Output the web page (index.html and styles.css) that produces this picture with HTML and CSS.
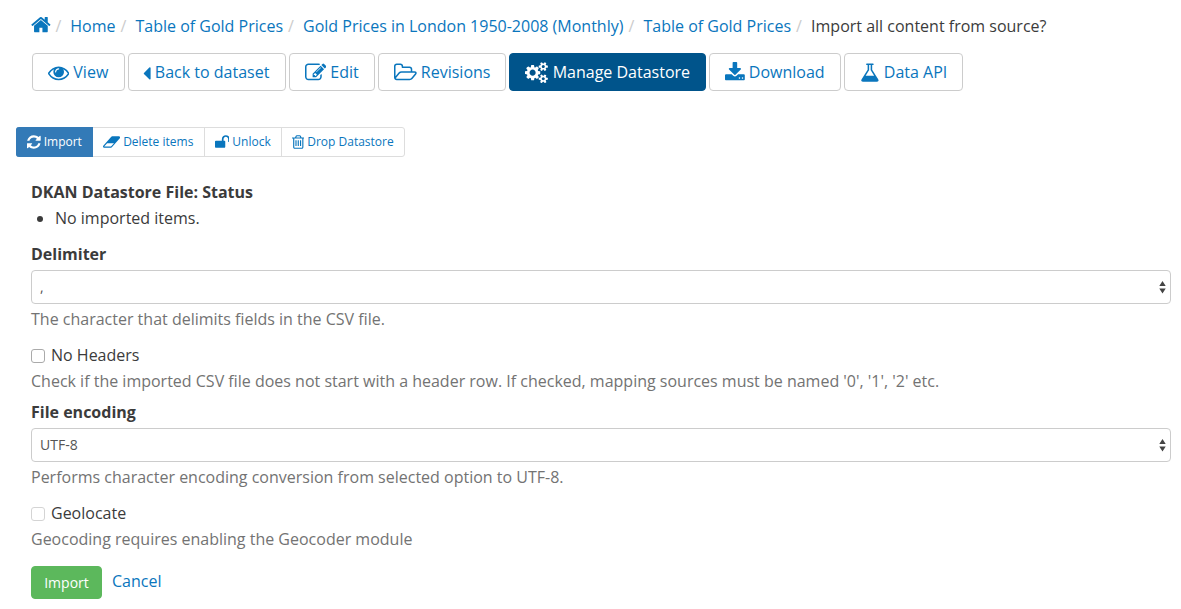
FILE: index.html
```html
<!DOCTYPE html>
<html lang="en">
<head>
<meta charset="utf-8">
<title>Import all content from source?</title>
<link rel="stylesheet" href="styles.css">
</head>
<body>
<ol class="breadcrumb">
<li><a href="#" aria-label="Front page"><svg class="icon icon-home" viewBox="64 0 1664 1792"><path d="M1472 992v480q0 26-19 45t-45 19h-384v-384h-256v384h-384q-26 0-45-19t-19-45v-480q0-1 .5-3t.5-3l575-474 575 474q1 2 1 6zm223-69l-62 74q-8 9-21 11h-3q-13 0-21-7l-692-577-692 577q-12 8-24 7-13-2-21-11l-62-74q-8-10-7-23.500t11-21.500l719-599q32-26 76-26t76 26l244 204v-195q0-14 9-23t23-9h192q14 0 23 9t9 23v408l219 182q10 8 11 21.500t-7 23.500z"/></svg></a></li>
<li><a href="#">Home</a></li>
<li><a href="#">Table of Gold Prices</a></li>
<li><a href="#">Gold Prices in London 1950-2008 (Monthly)</a></li>
<li><a href="#">Table of Gold Prices</a></li>
<li>Import all content from source?</li>
</ol>

<nav class="tabs">
<a href="#" class="tab view"><svg class="icon" viewBox="0 0 1792 1792"><path d="M1664 960q-152-236-381-353 61 104 61 225 0 185-131.500 316.500t-316.500 131.500-316.500-131.500-131.500-316.500q0-121 61-225-229 117-381 353 133 205 333.500 326.500t434.500 121.500 434.500-121.500 333.500-326.500zm-720-384q0-20-14-34t-34-14q-125 0-214.500 89.500t-89.500 214.500q0 20 14 34t34 14 34-14 14-34q0-86 61-147t147-61q20 0 34-14t14-34zm848 384q0 34-20 69-140 230-376.500 368.500t-499.500 138.500-499.500-139-376.500-368q-20-35-20-69t20-69q140-229 376.500-368t499.500-139 499.500 139 376.500 368q20 35 20 69z"/></svg><span>View</span></a>
<a href="#" class="tab back"><svg class="icon caret" viewBox="0 0 640 1792"><path d="M640 512v896q0 26-19 45t-45 19-45-19l-448-448q-19-19-19-45t19-45l448-448q19-19 45-19t45 19 19 45z"/></svg><span>Back to dataset</span></a>
<a href="#" class="tab edit"><svg class="icon" viewBox="0 0 1792 1792"><path d="M888 1184l116-116-152-152-116 116v56h96v96h56zm440-720q-16-16-33 1l-350 350q-17 17-1 33t33-1l350-350q17-17 1-33zm80 594v190q0 119-84.500 203.500t-203.500 84.500h-832q-119 0-203.500-84.500t-84.500-203.500v-832q0-119 84.500-203.500t203.500-84.500h832q63 0 117 25 15 7 18 23 3 17-9 29l-49 49q-14 14-32 8-23-6-45-6h-832q-66 0-113 47t-47 113v832q0 66 47 113t113 47h832q66 0 113-47t47-113v-126q0-13 9-22l64-64q15-15 35-7t20 29zm-96-738l288 288-672 672h-288v-288zm444 132l-92 92-288-288 92-92q28-28 68-28t68 28l152 152q28 28 28 68t-28 68z"/></svg><span>Edit</span></a>
<a href="#" class="tab revisions"><svg class="icon" viewBox="-64 0 1920 1792"><path d="M1717 931q0-35-53-35h-1088q-40 0-85.500 21.500t-71.500 52.500l-294 363q-18 24-18 40 0 35 53 35h1088q40 0 86-22t71-53l294-363q18-22 18-39zm-1141-163h768v-160q0-40-28-68t-68-28h-576q-40 0-68-28t-28-68v-64q0-40-28-68t-68-28h-320q-40 0-68 28t-28 68v853l256-315q44-53 116-87.500t140-34.500zm1269 163q0 62-46 120l-295 363q-43 53-116 87.500t-140 34.500h-1088q-92 0-158-66t-66-158v-960q0-92 66-158t158-66h320q92 0 158 66t66 158v32h544q92 0 158 66t66 158v160h192q54 0 99 24.500t67 70.500q15 32 15 68z"/></svg><span>Revisions</span></a>
<a href="#" class="tab manage active"><svg class="icon" viewBox="-64 0 1920 1792"><path d="M832 896q0-106-75-181t-181-75-181 75-75 181 75 181 181 75 181-75 75-181zm768 512q0-52-38-90t-90-38-90 38-38 90q0 53 37.500 90.500t90.500 37.500 90.500-37.500 37.500-90.500zm0-1024q0-52-38-90t-90-38-90 38-38 90q0 53 37.500 90.500t90.500 37.500 90.500-37.500 37.500-90.500zm-384 421v185q0 10-7 19.500t-16 10.500l-155 24q-11 35-32 76 34 48 90 115 7 11 7 20 0 12-7 19-23 30-82.500 89.500t-78.500 59.500q-11 0-21-7l-115-90q-37 19-77 31-11 108-23 155-7 24-30 24h-186q-11 0-20-7.500t-10-17.500l-23-153q-34-10-75-31l-118 89q-7 7-20 7-11 0-21-8-144-133-144-160 0-9 7-19 10-14 41-53t47-61q-23-44-35-82l-152-24q-10-1-17-9.500t-7-19.500v-185q0-10 7-19.500t16-10.500l155-24q11-35 32-76-34-48-90-115-7-11-7-20 0-12 7-20 22-30 82-89t79-59q11 0 21 7l115 90q34-18 77-32 11-108 23-154 7-24 30-24h186q11 0 20 7.500t10 17.500l23 153q34 10 75 31l118-89q8-7 20-7 11 0 21 8 144 133 144 160 0 8-7 19-12 16-42 54t-45 60q23 48 34 82l152 23q10 2 17 10.500t7 19.500zM1856 1338v140q0 16-149 31-12 27-30 52 51 113 51 138 0 4-4 7-122 71-124 71-8 0-46-47t-52-68q-20 2-30 2t-30-2q-14 21-52 68t-46 47q-2 0-124-71-4-3-4-7 0-25 51-138-18-25-30-52-149-15-149-31v-140q0-16 149-31 13-29 30-52-51-113-51-138 0-4 4-7 4-2 35-20t59-34 30-16q8 0 46 46.500t52 67.500q20-2 30-2t30 2q51-71 92-112l6-2q4 0 124 70 4 3 4 7 0 25-51 138 17 23 30 52 149 15 149 31zM1856 314v140q0 16-149 31-12 27-30 52 51 113 51 138 0 4-4 7-122 71-124 71-8 0-46-47t-52-68q-20 2-30 2t-30-2q-14 21-52 68t-46 47q-2 0-124-71-4-3-4-7 0-25 51-138-18-25-30-52-149-15-149-31v-140q0-16 149-31 13-29 30-52-51-113-51-138 0-4 4-7 4-2 35-20t59-34 30-16q8 0 46 46.500t52 67.500q20-2 30-2t30 2q51-71 92-112l6-2q4 0 124 70 4 3 4 7 0 25-51 138 17 23 30 52 149 15 149 31z"/></svg><span>Manage Datastore</span></a>
<a href="#" class="tab download"><svg class="icon" viewBox="64 0 1664 1792"><path d="M1344 1344q0-26-19-45t-45-19-45 19-19 45 19 45 45 19 45-19 19-45zm256 0q0-26-19-45t-45-19-45 19-19 45 19 45 45 19 45-19 19-45zm128-224v320q0 40-28 68t-68 28h-1472q-40 0-68-28t-28-68v-320q0-40 28-68t68-28h465l135 136q58 56 136 56t136-56l136-136h464q40 0 68 28t28 68zm-325-569q17 41-14 70l-448 448q-18 19-45 19t-45-19l-448-448q-31-29-14-70 17-39 59-39h256v-448q0-26 19-45t45-19h256q26 0 45 19t19 45v448h256q42 0 59 39z"/></svg><span>Download</span></a>
<a href="#" class="tab api"><svg class="icon" viewBox="64 0 1664 1792"><path d="M1591 1448q56 89 21.500 152.500t-140.500 63.500h-1152q-106 0-140.500-63.500t21.500-152.500l503-793v-399h-64q-26 0-45-19t-19-45 19-45 45-19h512q26 0 45 19t19 45-19 45-45 19h-64v399zm-779-725l-272 429h712l-272-429-20-31v-436h-128v436z"/></svg><span>Data API</span></a>
</nav>

<nav class="actions">
<a href="#" class="action import active"><svg class="icon" viewBox="128 0 1536 1792"><path d="M1639 1056q0 5-1 7-64 268-268 434.500t-478 166.500q-146 0-282.500-55t-243.500-157l-129 129q-19 19-45 19t-45-19-19-45v-448q0-26 19-45t45-19h448q26 0 45 19t19 45-19 45l-137 137q71 66 161 102t187 36q134 0 250-65t186-179q11-17 53-117 8-23 30-23h192q13 0 22.500 9.500t9.500 22.500zm25-800v448q0 26-19 45t-45 19h-448q-26 0-45-19t-19-45 19-45l138-138q-148-137-349-137-134 0-250 65t-186 179q-11 17-53 117-8 23-30 23h-199q-13 0-22.500-9.500t-9.500-22.500v-7q65-268 270-434.500t480-166.500q146 0 284 55.500t245 156.500l130-129q19-19 45-19t45 19 19 45z"/></svg><span>Import</span></a>
<a href="#" class="action delete"><svg class="icon" viewBox="0 0 1920 1792"><path d="M896 1408l336-384h-768l-336 384h768zm1013-1077q15 34 9.500 71.500t-30.500 65.500l-896 1024q-38 44-96 44h-768q-38 0-69.500-20.500t-47.500-54.500q-15-34-9.500-71.500t30.500-65.500l896-1024q38-44 96-44h768q38 0 69.500 20.500t47.500 54.500z"/></svg><span>Delete items</span></a>
<a href="#" class="action unlock"><svg class="icon" viewBox="64 0 1664 1792"><path d="M1728 576v256q0 26-19 45t-45 19h-64q-26 0-45-19t-19-45v-256q0-106-75-181t-181-75-181 75-75 181v192h96q40 0 68 28t28 68v576q0 40-28 68t-68 28h-960q-40 0-68-28t-28-68v-576q0-40 28-68t68-28h672v-192q0-185 131.500-316.500t316.500-131.500 316.500 131.500 131.500 316.500z"/></svg><span>Unlock</span></a>
<a href="#" class="action drop"><svg class="icon" viewBox="192 0 1408 1792"><path d="M704 736v576q0 14-9 23t-23 9h-64q-14 0-23-9t-9-23v-576q0-14 9-23t23-9h64q14 0 23 9t9 23zm256 0v576q0 14-9 23t-23 9h-64q-14 0-23-9t-9-23v-576q0-14 9-23t23-9h64q14 0 23 9t9 23zm256 0v576q0 14-9 23t-23 9h-64q-14 0-23-9t-9-23v-576q0-14 9-23t23-9h64q14 0 23 9t9 23zm128 724v-948h-896v948q0 22 7 40.500t14.500 27 10.500 8.500h832q3 0 10.500-8.500t14.500-27 7-40.500zm-672-1076h448l-48-117q-7-9-17-11h-317q-10 2-17 11zm928 32v64q0 14-9 23t-23 9h-96v948q0 83-47 143.500t-113 60.500h-832q-66 0-113-58.500t-47-141.500v-952h-96q-14 0-23-9t-9-23v-64q0-14 9-23t23-9h309l70-167q15-37 54-63t79-26h320q40 0 79 26t54 63l70 167h309q14 0 23 9t9 23z"/></svg><span>Drop Datastore</span></a>
</nav>

<form class="form">
<div class="label">DKAN Datastore File: Status</div>
<ul class="status"><li>No imported items.</li></ul>
<label class="label delimiter">Delimiter</label>
<div class="select comma"><span>,</span><svg class="arrows" viewBox="0 0 7 13"><path d="M3.500 0L6.700 5H.300zM3.500 12.500L6.700 7.500H.300z"/></svg></div>
<p class="help">The character that delimits fields in the CSV file.</p>
<label class="check"><input type="checkbox" class="box">No Headers</label>
<p class="help">Check if the imported CSV file does not start with a header row. If checked, mapping sources must be named '0', '1', '2' etc.</p>
<label class="label encoding">File encoding</label>
<div class="select"><span>UTF-8</span><svg class="arrows" viewBox="0 0 7 13"><path d="M3.500 0L6.700 5H.300zM3.500 12.500L6.700 7.500H.300z"/></svg></div>
<p class="help">Performs character encoding conversion from selected option to UTF-8.</p>
<label class="check"><input type="checkbox" class="box" disabled>Geolocate</label>
<p class="help">Geocoding requires enabling the Geocoder module</p>
<div class="buttons"><button type="button" class="submit">Import</button><a href="#">Cancel</a></div>
</form>
</body>
</html>
```
FILE: styles.css
```css
* { box-sizing: border-box; }
body {
  margin: 0;
  height: 609px;
  overflow: hidden;
  background: #fff;
  color: #3b3b3b;
  font: 16px/26px "Open Sans", "Noto Sans", sans-serif;
}
a { color: #0a76bd; text-decoration: none; }
p, ul, ol { margin: 0; padding: 0; }
.icon {
  display: block;
  flex: none;
  height: 1.3333em;
  fill: currentColor;
}

.breadcrumb {
  display: flex;
  height: 53px;
  padding: 13px 0 0 31px;
  list-style: none;
  white-space: nowrap;
}
.breadcrumb li { display: flex; }
.breadcrumb li + li::before {
  content: "/\00a0";
  padding: 0 5px;
  color: #ccc;
}
.breadcrumb li:nth-child(2)::before { padding: 0 4.8px 0 4.6px; }
.icon-home { margin-top: 1px; }

.tabs {
  display: flex;
  gap: 3px;
  padding-left: 32px;
}
.tab {
  display: flex;
  gap: 4px;
  height: 38px;
  padding: 5px 0 0 15px;
  border: 1px solid #ccc;
  border-radius: 4px;
  white-space: nowrap;
}
.tab .icon { margin-top: 2.6px; }
.tab .caret { margin-left: -0.8px; }
.tab.active { background: #00548b; border-color: #00548b; color: #fff; }
.view { width: 93px; }
.back { width: 158px; }
.edit { width: 86px; }
.revisions { width: 128px; }
.manage { width: 197px; }
.manage.tab { gap: 4.8px; }
.download { width: 132px; }
.api { width: 119px; }

.actions {
  display: flex;
  width: 389px;
  margin: 36px 0 0 16px;
  border: 1px solid #ddd;
  border-radius: 3px;
  font-size: 12px;
  line-height: 18px;
}
.action {
  display: flex;
  gap: 3px;
  height: 28px;
  padding: 5px 0 0 9px;
  border-left: 1px solid #ddd;
  white-space: nowrap;
}
.action .icon { margin-top: 1px; }
.action.active {
  height: 30px;
  margin: -1px 0 -1px -1px;
  padding: 6px 0 0 10px;
  border-color: #337ab7;
  border-radius: 3px 0 0 3px;
  background: #337ab7;
  color: #fff;
}
.import { width: 77px; }
.delete { width: 111px; border-left: 0; padding-left: 10px; }
.unlock { width: 77px; padding-left: 9.5px; }
.drop { flex: 1; padding-left: 9.7px; }

.form { padding: 22px 10px 0 31px; }
.label { display: block; font-weight: 700; }
.status { padding-left: 24px; }
.delimiter { margin-top: 10px; }
.select {
  display: flex;
  align-items: center;
  justify-content: space-between;
  height: 34px;
  margin: 3px 0 2px;
  padding: 0 4px 0 8px;
  border: 1px solid #ccc;
  border-radius: 4px;
  color: #555;
  font-size: 14px;
}
.arrows { width: 7px; height: 13px; fill: #444; }
.help { color: #737373; white-space: nowrap; }
.check { display: flex; align-items: center; margin-top: 10px; }
.box {
  appearance: none;
  width: 14px;
  height: 14px;
  margin: 2px 6px 0 0;
  border: 1px solid #aaa;
  border-radius: 3px;
  background: #fff;
}
.box:disabled { border-color: #d4d4d4; }
.encoding { margin-top: 5px; }
.buttons { display: flex; gap: 10px; margin-top: 14px; }
.submit {
  width: 71px;
  height: 33px;
  padding: 0;
  border: 1px solid #5cb85c;
  border-radius: 4px;
  background: #5cb85c;
  color: #fff;
  font: 14px/20px "Open Sans", "Noto Sans", sans-serif;
}
.buttons a { margin-top: 2px; }
```
